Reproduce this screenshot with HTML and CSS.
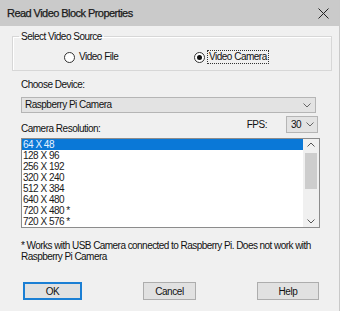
FILE: index.html
```html
<!DOCTYPE html>
<html lang="en">
<head>
  <meta charset="UTF-8" />
  <title>Read Video Block Properties</title>
  <link rel="stylesheet" href="styles.css">
</head>
<body>

  <div class="window">
    <div class="titlebar">
      <span class="title">Read Video Block Properties</span>
      <svg class="close" width="11" height="11" viewBox="0 0 11 11">
        <path d="M0.5 0.5 L10.5 10.5 M10.5 0.5 L0.5 10.5" stroke="#222" stroke-width="1" fill="none"/>
      </svg>
    </div>

    <div class="content">
      <fieldset class="group">
        <legend>Select Video Source</legend>
        <div class="radios">
          <label class="radio">
            <span class="dot"></span>
            <span class="radio-text">Video File</span>
          </label>
          <label class="radio">
            <span class="dot checked"></span>
            <span class="radio-text focused">Video Camera</span>
          </label>
        </div>
      </fieldset>

      <div class="label device-label">Choose Device:</div>
      <div class="combo device">
        <span>Raspberry Pi Camera</span>
        <svg class="chev" width="8" height="5" viewBox="0 0 8 5">
          <path d="M0.5 0.5 L4 4 L7.5 0.5" stroke="#666" fill="none"/>
        </svg>
      </div>

      <div class="res-row">
        <div class="label res-label">Camera Resolution:</div>
        <div class="fps">
          <span class="label">FPS:</span>
          <div class="combo fps-box">
            <span>30</span>
            <svg class="chev" width="8" height="5" viewBox="0 0 8 5">
              <path d="M0.5 0.5 L4 4 L7.5 0.5" stroke="#666" fill="none"/>
            </svg>
          </div>
        </div>
      </div>

      <div class="listbox">
        <ul class="items">
          <li class="selected">64 X 48</li>
          <li>128 X 96</li>
          <li>256 X 192</li>
          <li>320 X 240</li>
          <li>512 X 384</li>
          <li>640 X 480</li>
          <li>720 X 480 *</li>
          <li>720 X 576 *</li>
        </ul>
        <div class="scrollbar">
          <svg class="arrow" width="16" height="12" viewBox="0 0 16 12">
            <path d="M4.5 7.5 L8 4 L11.5 7.5" stroke="#555" fill="none"/>
          </svg>
          <div class="track"><div class="thumb"></div></div>
          <svg class="arrow" width="16" height="12" viewBox="0 0 16 12">
            <path d="M4.5 4.5 L8 8 L11.5 4.5" stroke="#555" fill="none"/>
          </svg>
        </div>
      </div>

      <p class="note">* Works with USB Camera connected to Raspberry Pi. Does not work with Raspberry Pi Camera</p>

      <div class="buttons">
        <button class="btn ok">OK</button>
        <button class="btn cancel">Cancel</button>
        <button class="btn help">Help</button>
      </div>
    </div>
  </div>

</body>
</html>
```

FILE: styles.css
```css
body {
  margin: 0;
  font-family: 'Liberation Sans', Arial, sans-serif;
  color: #111;
}

.window {
  width: 340px;
  height: 311px;
  background: #f0f0f0;
  overflow: hidden;
  box-sizing: border-box;
  border-right: 1px solid #c9c9c9;
}

.titlebar {
  height: 26px;
  background: #cacaca;
  display: flex;
  align-items: center;
  justify-content: space-between;
  padding: 0 8px 0 7px;
}

.title {
  font-size: 11px;
  letter-spacing: -0.55px;
  color: #1a1a1a;
  -webkit-text-stroke: 0.25px #1a1a1a;
}

.close {
  margin-right: 2px;
}

.content {
  font-size: 10px;
  letter-spacing: -0.5px;
  line-height: 12px;
}

.group {
  margin: 4px 7px 0 12px;
  padding: 7px 6px 6px 6px;
  border: 1px solid #d7d7d7;
  box-shadow: inset 1px 1px 0 #fff;
}

.group legend {
  padding: 0 2px;
  line-height: 13px;
}

.radios {
  display: grid;
  grid-template-columns: 130px auto;
  margin-left: 45px;
  height: 14px;
  align-items: center;
}

.radio {
  display: flex;
  align-items: center;
  gap: 2px;
}

.dot {
  width: 9px;
  height: 9px;
  border: 1px solid #333;
  border-radius: 50%;
  background: #fff;
  display: flex;
  align-items: center;
  justify-content: center;
}

.dot.checked::after {
  content: "";
  width: 5px;
  height: 5px;
  border-radius: 50%;
  background: #111;
}

.radio-text {
  padding: 0 1px;
  border: 1px solid transparent;
}

.radio-text.focused {
  border: 1px dotted #333;
}

.label {
  line-height: 12px;
}

.device-label {
  margin: 8px 0 0 21px;
}

.combo {
  display: flex;
  align-items: center;
  justify-content: space-between;
  box-sizing: border-box;
  background: #e3e3e3;
  border: 1px solid #b5b5b5;
}

.device {
  margin: 6px 0 0 21px;
  width: 295px;
  height: 16px;
  padding: 0 4px 0 3px;
}

.res-row {
  display: flex;
  justify-content: space-between;
  margin: 3px 21px 0 21px;
  height: 17px;
}

.res-label {
  align-self: flex-end;
  margin-bottom: -2px;
}

.fps {
  display: flex;
  align-items: center;
  gap: 19px;
}

.fps-box {
  width: 32px;
  height: 17px;
  padding: 0 3px 0 4px;
}

.listbox {
  margin: 5px 0 0 21px;
  width: 299px;
  height: 90px;
  box-sizing: border-box;
  border: 1px solid #8c8c8c;
  background: #fff;
  display: flex;
}

.items {
  list-style: none;
  margin: 0;
  padding: 0;
  flex: 1;
}

.items li {
  height: 11px;
  line-height: 11px;
  padding-left: 1px;
  color: #1a1a1a;
}

.items li.selected {
  background: #0a78d7;
  color: #e8f3ff;
}

.scrollbar {
  width: 16px;
  background: #f0f0f0;
  display: flex;
  flex-direction: column;
}

.track {
  flex: 1;
  padding: 2px 2px 0 2px;
}

.thumb {
  height: 36px;
  background: #cdcdcd;
}

.note {
  margin: 12px 20px 0 21px;
  line-height: 11px;
  letter-spacing: -0.55px;
}

.buttons {
  display: flex;
  justify-content: space-between;
  margin: 20px 20px 0 23px;
}

.btn {
  height: 18px;
  padding: 0;
  font-family: inherit;
  font-size: 10px;
  letter-spacing: -0.4px;
  color: #111;
  background: #e1e1e1;
  border: 1px solid #adadad;
}

.ok {
  width: 59px;
  border: 2px solid #1b7fd4;
}

.cancel {
  width: 53px;
}

.help {
  width: 62px;
}
```
